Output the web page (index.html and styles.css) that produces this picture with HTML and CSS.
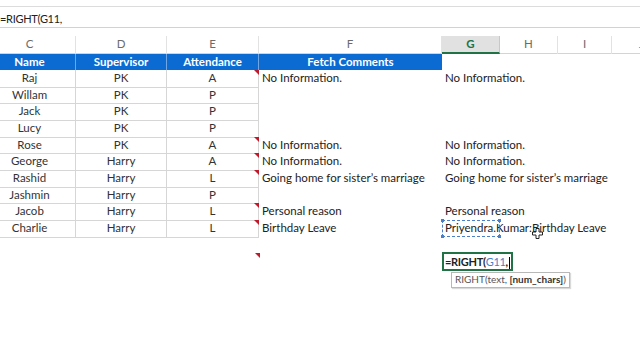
FILE: index.html
```html
<!DOCTYPE html>
<html>
<head>
<meta charset="utf-8">
<link rel="stylesheet" href="styles.css">
</head>
<body>
<div class="top"></div>
<div class="fbar">=RIGHT(G11,</div>
<div class="gap"></div>
<div class="sheet">
  <div class="row colhdr">
    <div class="ch">C</div><div class="ch">D</div><div class="ch">E</div><div class="ch">F</div><div class="ch sel">G</div><div class="ch">H</div><div class="ch">I</div><div class="ch">J</div>
  </div>
  <div class="row thead">
    <div class="th">Name</div><div class="th">Supervisor</div><div class="th">Attendance</div><div class="th last">Fetch Comments</div><div></div><div></div><div></div><div></div>
  </div>
  <div class="row"><div class="td">Raj</div><div class="td">PK</div><div class="td note">A</div><div class="tx">No Information.</div><div class="tx">No Information.</div><div></div><div></div><div></div></div>
  <div class="row"><div class="td">Willam</div><div class="td">PK</div><div class="td">P</div><div class="tx"></div><div class="tx"></div><div></div><div></div><div></div></div>
  <div class="row"><div class="td">Jack</div><div class="td">PK</div><div class="td">P</div><div class="tx"></div><div class="tx"></div><div></div><div></div><div></div></div>
  <div class="row"><div class="td">Lucy</div><div class="td">PK</div><div class="td">P</div><div class="tx"></div><div class="tx"></div><div></div><div></div><div></div></div>
  <div class="row"><div class="td">Rose</div><div class="td">PK</div><div class="td note">A</div><div class="tx">No Information.</div><div class="tx">No Information.</div><div></div><div></div><div></div></div>
  <div class="row"><div class="td">George</div><div class="td">Harry</div><div class="td note">A</div><div class="tx">No Information.</div><div class="tx">No Information.</div><div></div><div></div><div></div></div>
  <div class="row"><div class="td">Rashid</div><div class="td">Harry</div><div class="td note">L</div><div class="tx">Going home for sister’s marriage</div><div class="tx">Going home for sister’s marriage</div><div></div><div></div><div></div></div>
  <div class="row"><div class="td">Jashmin</div><div class="td">Harry</div><div class="td">P</div><div class="tx"></div><div class="tx"></div><div></div><div></div><div></div></div>
  <div class="row"><div class="td">Jacob</div><div class="td">Harry</div><div class="td note">L</div><div class="tx">Personal reason</div><div class="tx">Personal reason</div><div></div><div></div><div></div></div>
  <div class="row"><div class="td">Charlie</div><div class="td">Harry</div><div class="td note">L</div><div class="tx">Birthday Leave</div>
    <div class="tx ref">Priyendra.Kumar:Birthday Leave<span class="refbox"><i class="h tl"></i><i class="h tr"></i><i class="h bl"></i><i class="h br"></i></span><svg class="cursor" width="11" height="11" viewBox="0 0 11 11"><path d="M4 0.5h3v3.5h3.5v3h-3.5v3.5h-3v-3.5h-3.5v-3h3.5z" fill="#fff" stroke="#222" stroke-width="1"/></svg></div><div></div><div></div><div></div></div>
  <div class="row"><div></div><div></div><div></div><div></div><div></div><div></div><div></div><div></div></div>
  <div class="row"><div></div><div></div><div class="blank note"></div><div></div>
    <div class="edit"><div class="editbox">=RIGHT(<span class="refc">G11</span>,<span class="caret"></span></div><div class="tip">RIGHT(text, <b>[num_chars]</b>)</div></div><div></div><div></div><div></div></div>
</div>
</body>
</html>
```

FILE: styles.css
```css
html, body {
  margin: 0;
  padding: 0;
  background: #fff;
}
body {
  width: 640px;
  height: 360px;
  overflow: hidden;
  font-family: Lato, "Liberation Sans", sans-serif;
  font-size: 11.5px;
  color: #222;
}
.top {
  height: 6px;
  border-bottom: 1px solid #dcdcdc;
}
.fbar {
  height: 20px;
  line-height: 23px;
  border-bottom: 1px solid #d2d2d2;
  font-size: 11px;
  letter-spacing: -0.3px;
  color: #222;
}
.gap {
  height: 8px;
}
.sheet {
  margin-left: -16px;
  width: 680px;
}
.row {
  display: grid;
  grid-template-columns: 92px 91px 92px 183px 58px 58px 54px 60px;
  height: 16.67px;
  line-height: 16.67px;
}
.row > div {
  box-sizing: border-box;
  white-space: nowrap;
  position: relative;
}
.colhdr {
  height: 17px;
  line-height: 16px;
  border-bottom: 1px solid #d4d4d4;
}
.ch {
  text-align: center;
  color: #6b6b6b;
  font-size: 11.5px;
  border-right: 1px solid #e2e2e2;
}
.ch.sel {
  background: #e1e1e1;
  color: #217346;
  font-weight: bold;
  border-bottom: 2px solid #217346;
  border-right: 1px solid #c8c8c8;
}
.thead {
  height: 16px;
  line-height: 16px;
}
.th {
  background: #0b6bd3;
  color: #fff;
  font-weight: bold;
  text-align: center;
  border-right: 1px solid #6ea6e6;
}
.th.last {
  border-right: none;
}
.td {
  text-align: center;
  color: #333;
  border-right: 1px solid #d6d6d6;
  border-bottom: 1px solid #d6d6d6;
}
.tx {
  padding-left: 3px;
  color: #222;
}
.note::after {
  content: "";
  position: absolute;
  right: -1px;
  top: 0;
  border-top: 5px solid #c0192b;
  border-left: 5px solid transparent;
}
.refbox {
  position: absolute;
  left: 0;
  top: 0;
  width: 58px;
  height: 17px;
  box-sizing: border-box;
  border: 1px dashed #4a7fc9;
}
.h {
  position: absolute;
  width: 3px;
  height: 3px;
  background: #4a7fc9;
}
.h.tl { left: -2px; top: -2px; }
.h.tr { right: -2px; top: -2px; }
.h.bl { left: -2px; bottom: -2px; }
.h.br { right: -2px; bottom: -2px; }
.cursor {
  position: absolute;
  left: 90px;
  top: 8px;
}
.edit {
  position: relative;
}
.editbox {
  position: absolute;
  left: 0;
  top: -1px;
  height: 19px;
  box-sizing: border-box;
  border: 2px solid #217346;
  line-height: 15px;
  padding: 0 1px 0 1px;
  font-size: 11px;
  letter-spacing: -0.3px;
  font-weight: bold;
  color: #222;
  background: #fff;
  white-space: nowrap;
}
.refc {
  color: #4a7fc9;
  font-weight: normal;
}
.caret {
  display: inline-block;
  width: 1px;
  height: 12px;
  background: #000;
  vertical-align: middle;
  margin-left: 1px;
}
.tip {
  position: absolute;
  left: 9px;
  top: 19px;
  padding: 0 3px;
  height: 14px;
  line-height: 13px;
  border: 1px solid #b8b8b8;
  background: #fff;
  color: #555;
  font-size: 10px;
  box-shadow: 1px 1px 1px rgba(0,0,0,0.15);
}
.tip b {
  color: #333;
}
```
